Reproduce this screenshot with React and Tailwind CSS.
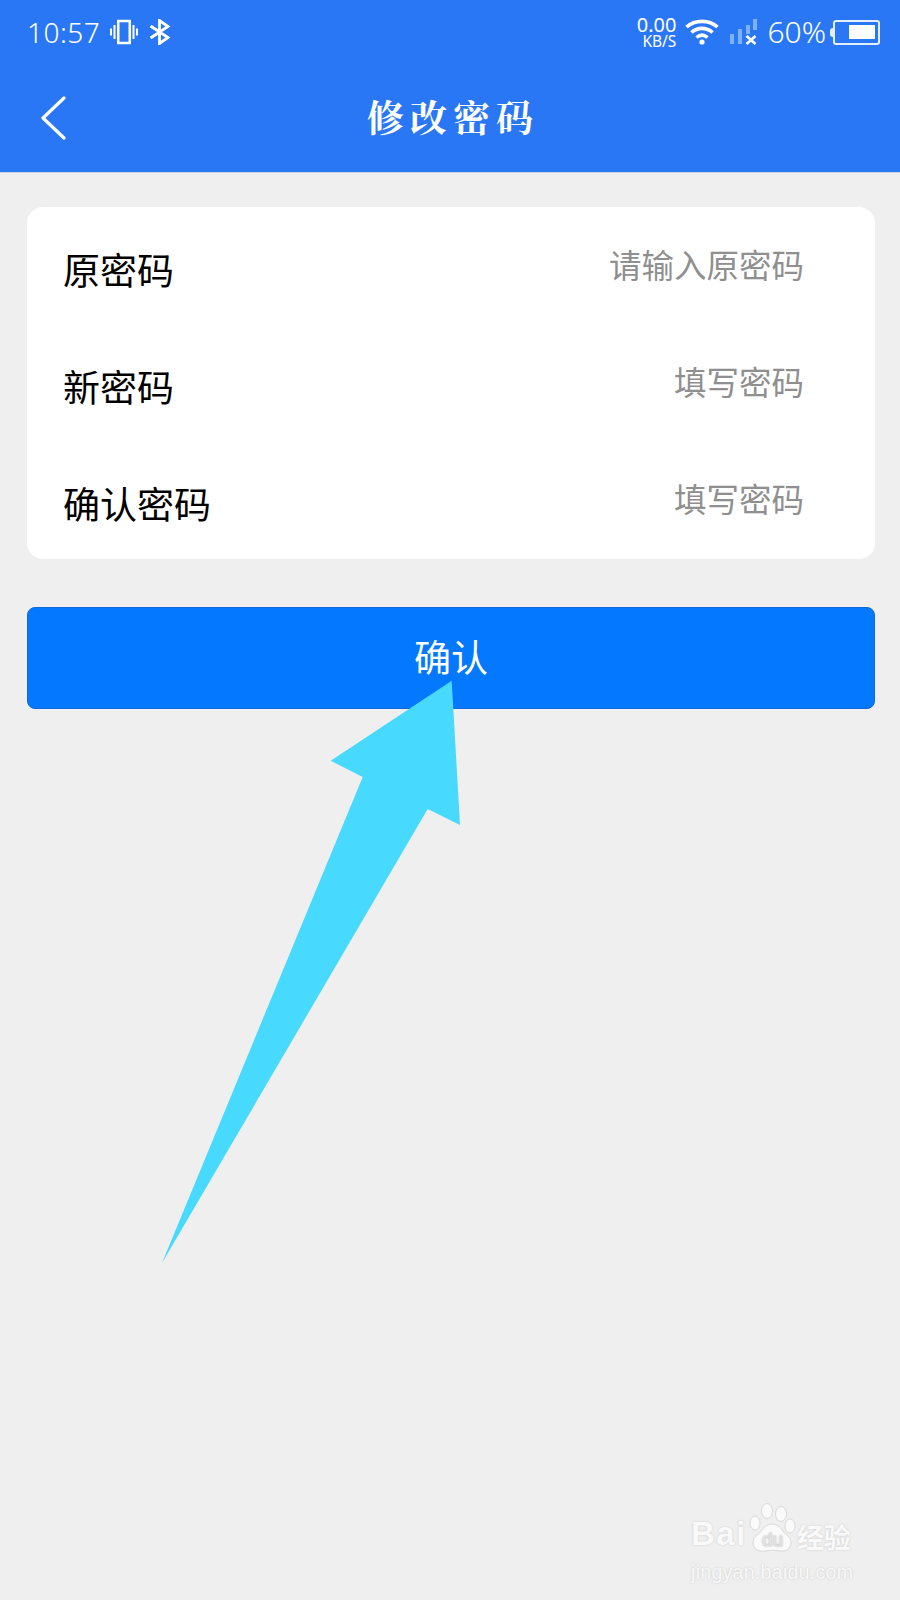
const FONT = "font-['Noto_Sans_CJK_SC','Noto_Sans',sans-serif]";

function Row({ label, hint }) {
  return (
    <div className="flex h-[117px] items-start justify-between pl-[36px] pr-[71px]">
      <span className="mt-[35px] text-[37px] leading-[54px] text-black">{label}</span>
      <span className="mt-[34px] text-[32.5px] leading-[46px] text-[#8f8f8f]">{hint}</span>
    </div>
  );
}

function Vibrate() {
  return (
    <svg width="28" height="26" viewBox="0 0 28 26" fill="none" stroke="white">
      <rect x="8.25" y="2" width="11.5" height="22" strokeWidth="2.5" />
      <path d="M4.5 6v14M1 9.5v7M23.5 6v14M27 9.5v7" strokeWidth="2" />
    </svg>
  );
}

function Bluetooth() {
  return (
    <svg width="22" height="26" viewBox="0 0 22 26" fill="none" stroke="white" strokeWidth="2.8">
      <path d="M1.5 7 L19 18.5 L10.5 24.5 V1.5 L19 7.5 L1.5 19" />
    </svg>
  );
}

function Wifi() {
  return (
    <svg width="34" height="26" viewBox="0 0 34 26" fill="none" stroke="white" strokeWidth="3.6">
      <path d="M1.5 8 C10 0.5 24 0.5 32.5 8" />
      <path d="M6.5 13.5 C12.5 8 21.5 8 27.5 13.5" />
      <path d="M11.5 18.5 C15 15.5 19 15.5 22.5 18.5" />
      <circle cx="17" cy="23" r="2.6" fill="white" stroke="none" />
    </svg>
  );
}

function Signal() {
  return (
    <svg width="28" height="26" viewBox="0 0 28 26">
      <rect x="0" y="15" width="4" height="10" fill="#7fb0fa" />
      <rect x="8" y="10" width="4" height="15" fill="#7fb0fa" />
      <rect x="16" y="6" width="4" height="9" fill="#7fb0fa" />
      <rect x="23" y="0" width="4" height="11" fill="#7fb0fa" />
      <path d="M16.5 17 L25.5 25 M25.5 17 L16.5 25" stroke="white" strokeWidth="2.6" />
    </svg>
  );
}

function Battery() {
  return (
    <div className="flex items-center">
      <div className="h-[9px] w-[3px] rounded-l-sm bg-[#e4eeff]" />
      <div className="flex h-[25px] w-[47px] items-center justify-end rounded-[3px] border-2 border-[#e4eeff] pr-[3px]">
        <div className="h-[14px] w-[26px] bg-white" />
      </div>
    </div>
  );
}

function Watermark() {
  return (
    <div className="absolute left-[691px] top-[1503px] w-[165px] text-[#f9f9f9] [text-shadow:0_0_2px_#c4c4c4]">
      <div className="flex h-[50px] items-end">
        <span className="font-['Liberation_Sans',sans-serif] text-[33px] font-bold leading-[38px] tracking-[1.5px]">Bai</span>
        <svg width="47" height="50" viewBox="0 0 47 50" className="ml-[2px] shrink-0" fill="#fafafa" stroke="#d9d9d9" strokeWidth="1">
          <ellipse cx="18" cy="8" rx="5.5" ry="7.5" />
          <ellipse cx="32" cy="11" rx="5.5" ry="7.5" />
          <ellipse cx="6" cy="20" rx="5" ry="7" />
          <ellipse cx="41" cy="23" rx="5" ry="7" />
          <path d="M23 21 C31 21 33 29 39 33 C46 40 40 50 31 48 C26 47 21 47 16 48 C6 50 0 40 7 33 C13 29 15 21 23 21 Z" />
          <text x="23.5" y="43" textAnchor="middle" fontFamily="Liberation Sans" fontSize="19" fill="#fafafa" stroke="#dcdcdc" strokeWidth="0.6">du</text>
        </svg>
        <span className="ml-[1px] text-[27px] font-bold leading-[32px]">经验</span>
      </div>
      <div className="mt-[9px] font-['Liberation_Sans',sans-serif] text-[19.5px] leading-[20px] [letter-spacing:0.3px]">jingyan.baidu.com</div>
    </div>
  );
}

export default function App() {
  return (
    <div className={"relative h-[1600px] w-[900px] overflow-hidden bg-[#efefef] " + FONT}>
      <header className="h-[173px] border-b border-[#c8d4e8] bg-[#2a77f6] text-white">
        <div className="flex h-[64px] items-center justify-between pl-[27px] pr-[20px]">
          <div className="flex items-center">
            <span className="font-['Noto_Sans',sans-serif] text-[28px] font-light leading-none tracking-[0.5px] text-white">10:57</span>
            <span className="ml-[10px] flex"><Vibrate /></span>
            <span className="ml-[11px] flex"><Bluetooth /></span>
          </div>
          <div className="flex items-center">
            <div className="mr-[9px] flex flex-col items-end font-['Noto_Sans',sans-serif] leading-none">
              <span className="text-[20px] leading-[19px]">0.00</span>
              <span className="text-[15.5px] leading-[15px]">KB/S</span>
            </div>
            <Wifi />
            <span className="ml-[11px] flex"><Signal /></span>
            <span className="ml-[9px] font-['Noto_Sans',sans-serif] text-[30px] font-light leading-none text-white">60%</span>
            <span className="ml-[4px] flex"><Battery /></span>
          </div>
        </div>
        <div className="relative flex h-[108px] items-center justify-center pb-[4px] pl-[6px]">
          <svg width="28" height="44" viewBox="0 0 28 44" fill="none" stroke="white" strokeWidth="3.2" strokeLinecap="round" strokeLinejoin="round" className="absolute left-[40px] top-[32px]">
            <path d="M24 2 L3 22 L24 42" />
          </svg>
          <span className="font-['Noto_Serif_CJK_SC','Noto_Sans_CJK_SC',serif] text-[37px] font-bold leading-none tracking-[6px]">修改密码</span>
        </div>
      </header>

      <main className="pl-[27px] pr-[25px] pt-[34px]">
        <section className="rounded-[16px] bg-white pb-[1px]">
          <Row label="原密码" hint="请输入原密码" />
          <Row label="新密码" hint="填写密码" />
          <Row label="确认密码" hint="填写密码" />
        </section>
        <button className="mt-[48px] flex h-[102px] w-full items-center justify-center rounded-[8px] border border-[#1268d8] bg-[#0478fe] pb-[2px] text-[37px] text-white">
          确认
        </button>
      </main>

      <svg width="900" height="1600" viewBox="0 0 900 1600" className="absolute left-0 top-0">
        <path d="M451.7 680.7 L330.7 760.7 L362.7 777 L162 1263 L427.7 809 L460 825 Z" fill="#48d9fe" />
      </svg>

      <Watermark />
    </div>
  );
}
